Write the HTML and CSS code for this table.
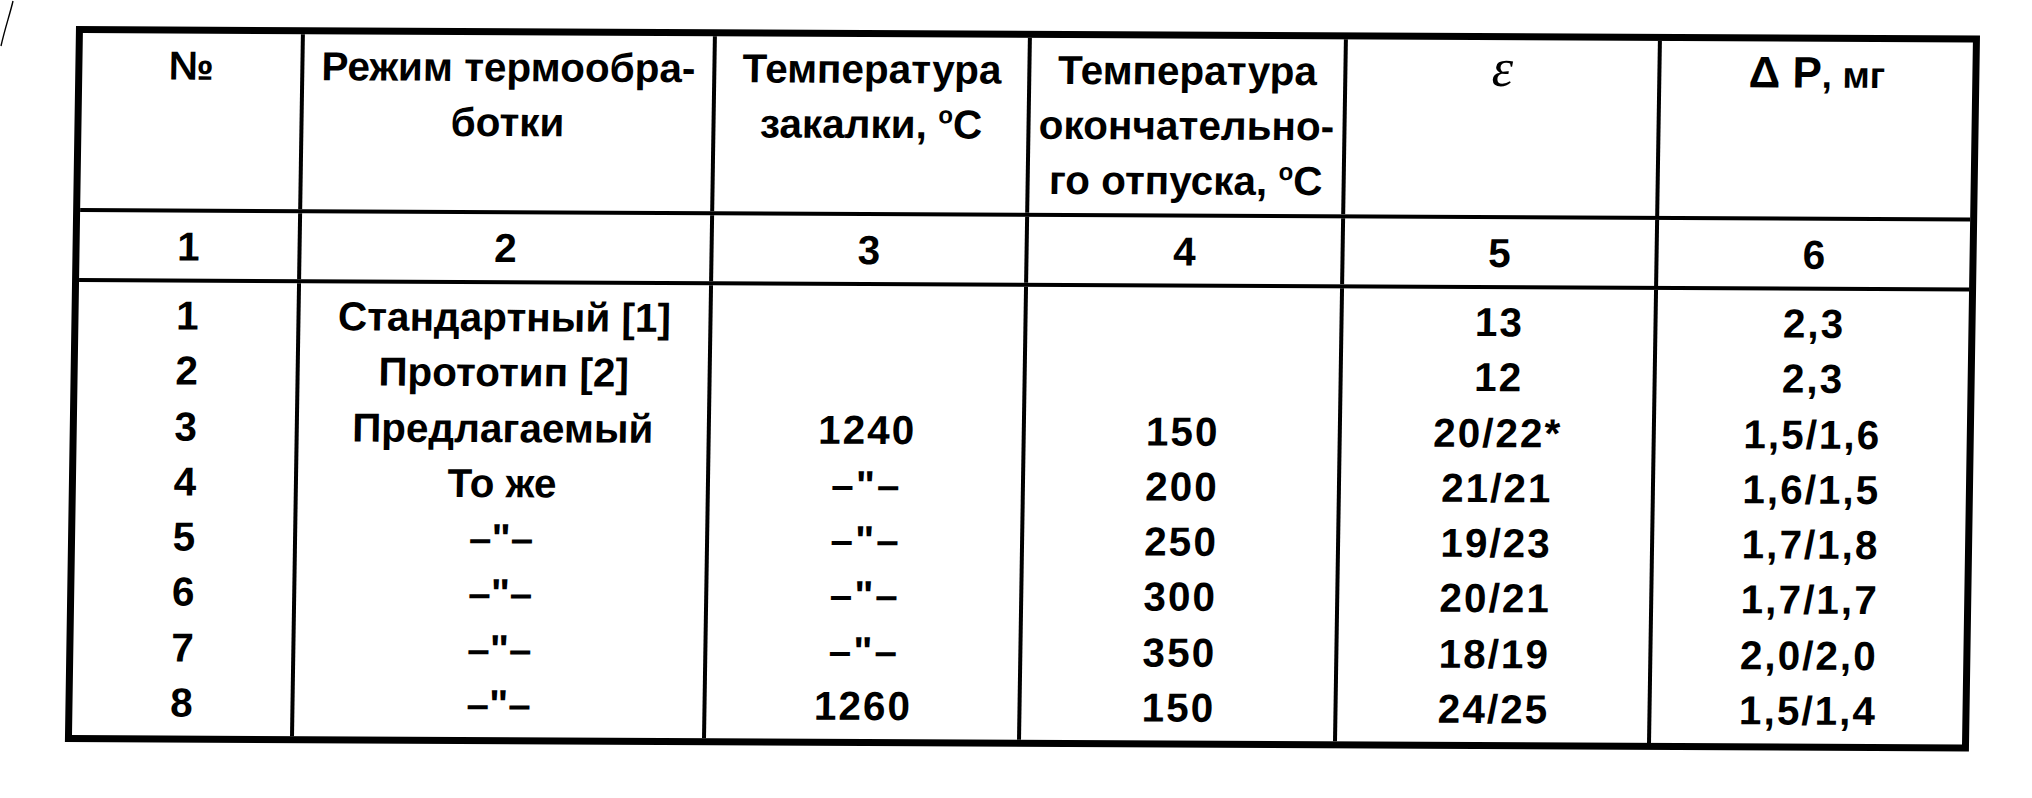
FILE: index.html
```html
<!DOCTYPE html>
<html lang="ru">
<head>
<meta charset="utf-8">
<title>Таблица</title>
<link rel="stylesheet" href="styles.css">
</head>
<body>
<div class="sheet">
  <svg class="mark" width="16" height="50" viewBox="0 0 16 50"><path d="M13 1 C 10 14, 5 28, 1 46" fill="none" stroke="#000" stroke-width="1.4"/></svg>
  <div class="tbl">
    <div class="band head">
      <div class="cell">№</div>
      <div class="cell">Режим термообра-<br>ботки</div>
      <div class="cell">Температура<br>закалки, <span class="deg">o</span>C</div>
      <div class="cell">Температура<br>окончательно-<br>го отпуска, <span class="deg">o</span>C</div>
      <div class="cell"><span class="eps">ε</span></div>
      <div class="cell"><span class="dp">Δ P</span><span class="mg">, мг</span></div>
    </div>
    <div class="band nums">
      <div class="cell num">1</div>
      <div class="cell num">2</div>
      <div class="cell num">3</div>
      <div class="cell num">4</div>
      <div class="cell num">5</div>
      <div class="cell num">6</div>
    </div>
    <div class="band body">
      <div class="cell num">
        <div class="ln">1</div><div class="ln">2</div><div class="ln">3</div><div class="ln">4</div>
        <div class="ln">5</div><div class="ln">6</div><div class="ln">7</div><div class="ln">8</div>
      </div>
      <div class="cell">
        <div class="ln">Стандартный [1]</div><div class="ln">Прототип [2]</div><div class="ln">Предлагаемый</div><div class="ln">То же</div>
        <div class="ln">–"–</div><div class="ln">–"–</div><div class="ln">–"–</div><div class="ln">–"–</div>
      </div>
      <div class="cell num">
        <div class="ln"></div><div class="ln"></div><div class="ln">1240</div><div class="ln">–"–</div>
        <div class="ln">–"–</div><div class="ln">–"–</div><div class="ln">–"–</div><div class="ln">1260</div>
      </div>
      <div class="cell num">
        <div class="ln"></div><div class="ln"></div><div class="ln">150</div><div class="ln">200</div>
        <div class="ln">250</div><div class="ln">300</div><div class="ln">350</div><div class="ln">150</div>
      </div>
      <div class="cell num">
        <div class="ln">13</div><div class="ln">12</div><div class="ln">20/22*</div><div class="ln">21/21</div>
        <div class="ln">19/23</div><div class="ln">20/21</div><div class="ln">18/19</div><div class="ln">24/25</div>
      </div>
      <div class="cell num">
        <div class="ln">2,3</div><div class="ln">2,3</div><div class="ln">1,5/1,6</div><div class="ln">1,6/1,5</div>
        <div class="ln">1,7/1,8</div><div class="ln">1,7/1,7</div><div class="ln">2,0/2,0</div><div class="ln">1,5/1,4</div>
      </div>
    </div>
  </div>
</div>
</body>
</html>
```

FILE: styles.css
```css
* { box-sizing: border-box; }
html, body { margin: 0; background: #fff; }
.sheet {
  position: relative;
  width: 2032px;
  height: 798px;
  overflow: hidden;
  padding: 26px 0 0 76px;
  background: #fff;
}
.mark { position: absolute; left: 0; top: 0; }
.tbl {
  width: 1904px;
  border: 7px solid #000;
  transform-origin: 0 0;
  transform: matrix(1, 0.005, -0.0155, 1, 0, 0);
  font-family: "Liberation Sans", Arial, sans-serif;
  font-weight: 700;
  font-size: 40.5px;
  line-height: 55px;
  color: #000;
}
.band {
  display: grid;
  grid-template-columns: 218px 412px 315px 316px 314px 315px;
}
.band + .band { border-top: 4px solid #000; }
.cell { text-align: center; white-space: nowrap; }
.cell + .cell { border-left: 4px solid #000; }
.num { letter-spacing: 2px; padding-left: 2px; }
.head { height: 175px; }
.head .cell { padding-top: 5px; }
.nums { height: 70px; }
.nums .cell { padding-top: 7px; }
.body { height: 457px; }
.body .cell { padding-top: 6px; }
.ln { height: 55.3px; line-height: 55.3px; }
.deg { font-size: 24px; vertical-align: 15px; line-height: 0; }
.eps {
  font-family: "Liberation Serif", "Times New Roman", serif;
  font-style: italic;
  font-weight: 400;
  font-size: 54px;
  line-height: 0;
}
.dp { font-size: 44px; line-height: 0; }
.mg { font-size: 37px; line-height: 0; }
```
